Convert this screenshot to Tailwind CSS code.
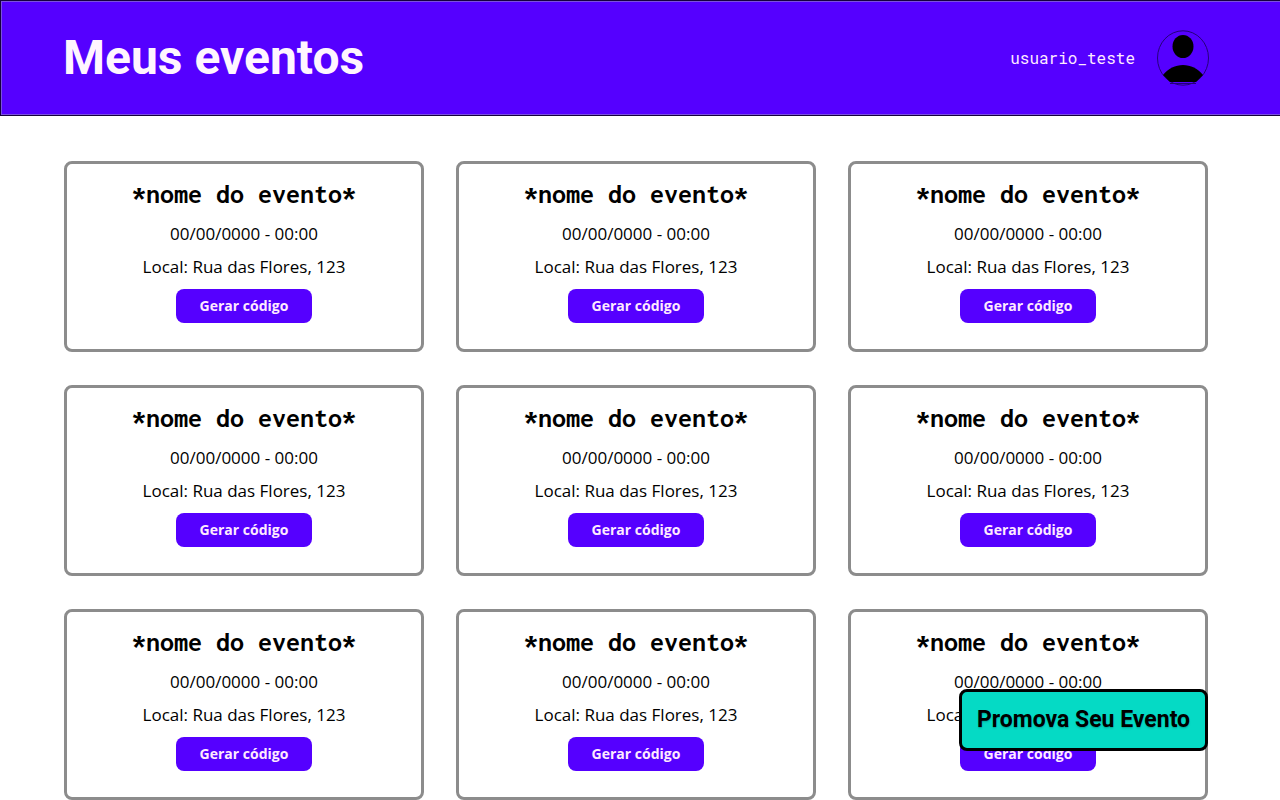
<!DOCTYPE html>
<html lang="pt-BR">
<head>
<meta charset="utf-8">
<meta name="viewport" content="width=device-width, initial-scale=1">
<title>Meus eventos</title>
<script src="https://cdn.jsdelivr.net/npm/@tailwindcss/browser@4"></script>
</head>
<body class="bg-white font-['Open_Sans',sans-serif] text-black">
<header class="border border-r-0 border-[#16003f] bg-[#5500ff]">
  <div class="flex items-center justify-between border border-r-0 border-[#7b50e0] py-7 pr-[71px] pl-[61px]">
    <h1 class="font-['Roboto',sans-serif] text-5xl leading-14 font-bold text-[#fff5ff]">Meus eventos</h1>
    <div class="flex items-center gap-[22px]">
      <span class="font-['Roboto_Mono','Liberation_Mono',monospace] text-base text-[#ffeaff]">usuario_teste</span>
      <svg class="h-14 w-[52px]" viewBox="0 0 52 56" role="img" aria-label="Perfil">
        <ellipse cx="26" cy="28" rx="25.5" ry="27.2" fill="none" stroke="#25007a"/>
        <ellipse cx="26" cy="16.5" rx="10.5" ry="11.5"/>
        <path d="M6 45C16 31.500 36 31.500 46 45L39 52H13Z"/>
        <path d="M13 53.500H39" stroke="#25007a"/>
      </svg>
    </div>
  </div>
</header>
<main id="eventos" class="grid grid-cols-3 gap-x-8 gap-y-[33px] pt-[45px] pr-[72px] pl-16">
</main>
<template id="cartao">
  <article class="flex flex-col items-center rounded-lg border-3 border-[#8c8c8c] pt-[14px] pb-[26px]">
    <h2 class="font-['Inconsolata','Roboto_Mono','Liberation_Mono',monospace] text-[28px] leading-8 font-bold">*nome do evento*</h2>
    <p class="mt-3 text-[17px] leading-6">00/00/0000 - 00:00</p>
    <p class="mt-[9px] text-[17px] leading-6">Local: Rua das Flores, 123</p>
    <button type="button" class="mt-[10px] h-[34px] rounded-lg bg-[#5500ff] px-6 text-sm font-bold text-[#ffeaff]">Gerar código</button>
  </article>
</template>
<button type="button" class="fixed right-[72px] bottom-[49px] h-[62px] w-[249px] rounded-lg border-3 border-black bg-[#05dac5] font-['Roboto',sans-serif] text-[23px] font-bold whitespace-nowrap text-black text-shadow-sm">Promova Seu Evento</button>
<script>
const lista = document.getElementById('eventos');
const modelo = document.getElementById('cartao');
for (let i = 0; i < 9; i++) lista.append(modelo.content.cloneNode(true));
</script>
</body>
</html>
